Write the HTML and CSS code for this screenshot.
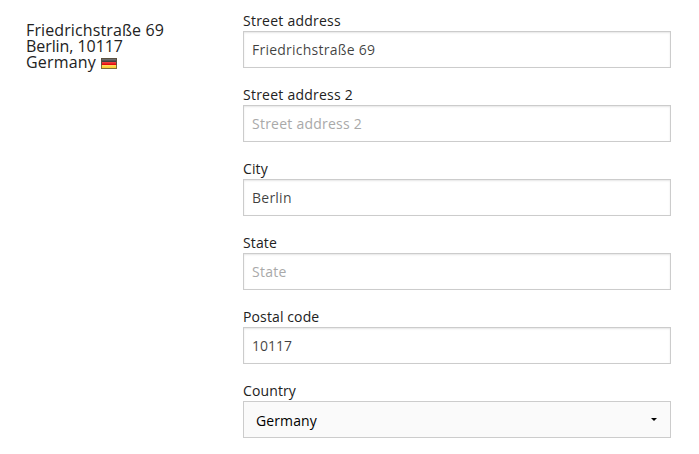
FILE: index.html
```html
<!DOCTYPE html>
<html lang="en">
<head>
<meta charset="utf-8">
<title>Address</title>
<link rel="stylesheet" href="styles.css">
</head>
<body>
<main class="layout">
  <address class="summary">
    <div class="street">Friedrichstraße 69</div>
    <div class="locality">Berlin, 10117</div>
    <div class="country">Germany <svg class="flag" viewBox="0 0 16 11" role="img" aria-label="Germany">
      <defs>
        <linearGradient id="black" x2="0" y2="1"><stop stop-color="#777"/><stop offset="1" stop-color="#333"/></linearGradient>
        <linearGradient id="red" x2="0" y2="1"><stop stop-color="#f34a4a"/><stop offset="1" stop-color="#e00000"/></linearGradient>
        <linearGradient id="gold" x2="0" y2="1"><stop stop-color="#ffe06a"/><stop offset="1" stop-color="#f9c927"/></linearGradient>
      </defs>
      <path fill="#5b5140" d="M0 0h16v11H0z"/><path fill="url(#black)" d="M1 1h14v3H1z"/><path fill="url(#red)" d="M1 4h14v3H1z"/><path fill="url(#gold)" d="M1 7h14v3H1z"/><path fill="#806d35" d="M0 7h1v4H0zM15 7h1v4h-1zM1 10h14v1H1z"/>
    </svg></div>
  </address>
  <form class="form">
    <label class="field wide">Street address<input type="text" value="Friedrichstraße 69" placeholder="Street address"></label>
    <label class="field wide">Street address 2<input type="text" placeholder="Street address 2"></label>
    <label class="field">City<input class="wide" type="text" value="Berlin" placeholder="City"></label>
    <label class="field">State<input class="wide" type="text" placeholder="State"></label>
    <label class="field">Postal code<input class="numeric" type="text" value="10117" placeholder="Postal code"></label>
    <label class="field">Country<span class="select-wrap"><select><option>Germany</option></select><svg class="arrow" viewBox="0 0 6 3"><path d="M0 0h6L3 3z"/></svg></span></label>
  </form>
</main>
</body>
</html>
```
FILE: styles.css
```css
* { box-sizing: border-box; }
body { margin: 0; background: #fff; color: #222; font-family: "Open Sans", sans-serif; }
.layout { display: grid; grid-template-columns: 217px 428px; padding: 10px 0 0 26px; }
.summary { padding-top: 12px; font-size: 16px; font-style: normal; line-height: 16px; }
.street { letter-spacing: .12px; }
.locality { letter-spacing: -.07px; }
.country { letter-spacing: .18px; }
.flag { width: 16px; height: 11px; margin-left: .7px; vertical-align: -1px; }
.form { display: grid; gap: 16px; }
.field { display: block; height: 58px; font-size: 14px; line-height: 21px; letter-spacing: .12px; }
input, select { display: block; width: 100%; height: 37px; margin: 0; border: 1px solid #ccc; border-radius: 0; font: 14px "Open Sans", sans-serif; letter-spacing: inherit; }
.wide { letter-spacing: .24px; }
.numeric { letter-spacing: 0; }
input { padding: 8px; background: #fff; color: rgba(0, 0, 0, .75); box-shadow: inset 0 1px 2px rgba(0, 0, 0, .1); }
input::placeholder { color: #a9a9a9; opacity: 1; }
.select-wrap { display: grid; align-items: center; }
select { grid-area: 1 / 1; padding: 2px 12px 0; appearance: none; background: #fafafa; color: #000; }
.arrow { grid-area: 1 / 1; justify-self: end; width: 6px; height: 3px; margin-right: 14px; pointer-events: none; }
```
